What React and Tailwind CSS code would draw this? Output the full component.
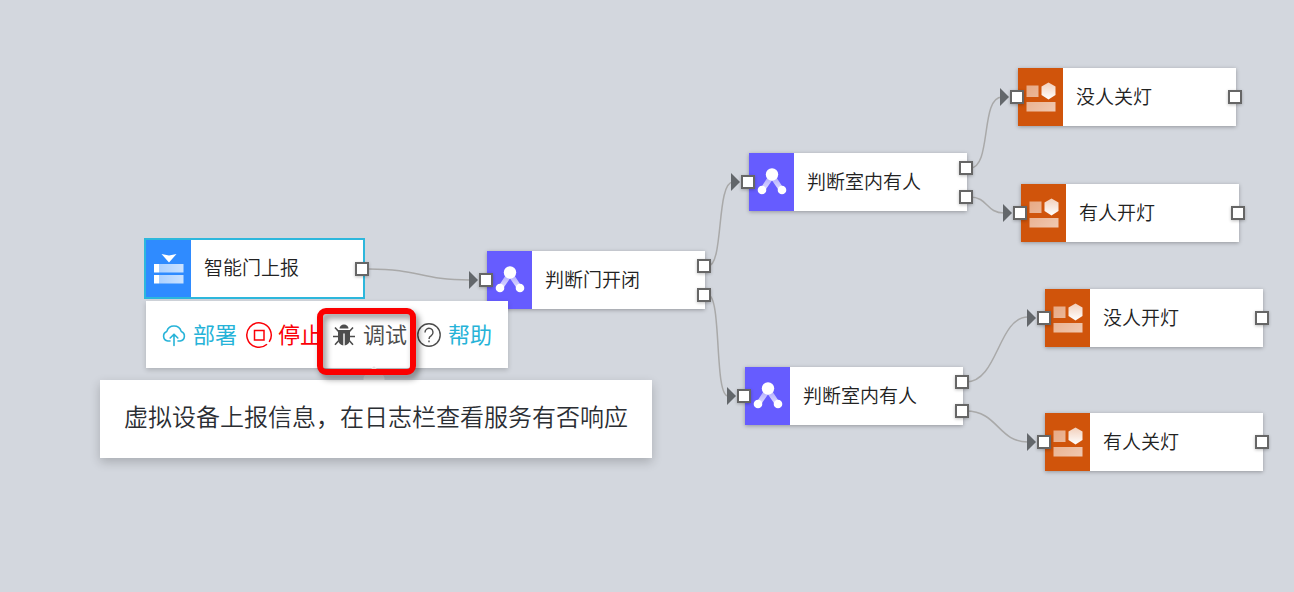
import React from "react";

const nodes = [
  { id: "report", kind: "device", label: "智能门上报", x: 144, y: 238, outputs: 1, selected: true },
  { id: "door", kind: "branch", label: "判断门开闭", x: 487, y: 251, outputs: 2 },
  { id: "roomA", kind: "branch", label: "判断室内有人", x: 749, y: 153, outputs: 2 },
  { id: "roomB", kind: "branch", label: "判断室内有人", x: 745, y: 367, outputs: 2 },
  { id: "offA", kind: "action", label: "没人关灯", x: 1018, y: 68, outputs: 1 },
  { id: "onA", kind: "action", label: "有人开灯", x: 1021, y: 184, outputs: 1 },
  { id: "onB", kind: "action", label: "没人开灯", x: 1045, y: 289, outputs: 1 },
  { id: "offB", kind: "action", label: "有人关灯", x: 1045, y: 413, outputs: 1 },
];

const edges = [
  "M369 269C420 269 420 280 470 280",
  "M708 266C724 266 716 182 733 182",
  "M708 295C722 295 714 396 728 396",
  "M970 168C992 168 980 97 1002 97",
  "M970 197C988 197 986 213 1004 213",
  "M966 382C998 382 998 317 1028 317",
  "M966 411C998 411 998 442 1028 442",
];

const tileColors = {
  device: "bg-[#2f8bff]",
  branch: "bg-[#665cff]",
  action: "bg-[#d0540b]",
};

function DeviceIcon() {
  return (
    <svg width="30" height="30" viewBox="0 0 30 30" aria-hidden="true">
      <defs>
        <linearGradient id="bar" x1="0" x2="1">
          <stop offset="0" stopColor="#fff" stopOpacity=".6" />
          <stop offset="1" stopColor="#fff" stopOpacity=".75" />
        </linearGradient>
      </defs>
      <path d="M7.500 0L15 1.500L22.500 0L15 8.500Z" fill="#fff" />
      <path d="M0 10h5v8.500H0zM0 21h5v8.500H0z" fill="#fff" />
      <path d="M5 10h24.500v8.500H5zM5 21h24.500v8.500H5z" fill="url(#bar)" />
    </svg>
  );
}

function BranchIcon() {
  return (
    <svg width="30" height="30" viewBox="0 0 30 30" aria-hidden="true">
      <defs>
        <linearGradient id="limb" x1="0" y1="0" x2="0" y2="1">
          <stop offset="0" stopColor="#fff" stopOpacity=".45" />
          <stop offset="1" stopColor="#fff" stopOpacity=".85" />
        </linearGradient>
      </defs>
      <path d="M11.500 9L16 12L7 25L3 22ZM18.500 9L14 12L23 25L27 22Z" fill="url(#limb)" />
      <circle cx="15" cy="7.500" r="6.200" fill="#fff" />
      <circle cx="5" cy="23" r="4.300" fill="#fff" />
      <circle cx="25" cy="23" r="4.300" fill="#fff" />
    </svg>
  );
}

function ActionIcon() {
  return (
    <svg width="30" height="30" viewBox="0 0 30 30" aria-hidden="true">
      <defs>
        <linearGradient id="block" x1="0" y1="0" x2="1" y2="1">
          <stop offset="0" stopColor="#fff" stopOpacity=".5" />
          <stop offset="1" stopColor="#fff" stopOpacity=".68" />
        </linearGradient>
        <linearGradient id="hex" x1="0" y1="0" x2="0" y2="1">
          <stop offset="0" stopColor="#fff" stopOpacity=".72" />
          <stop offset="1" stopColor="#fff" />
        </linearGradient>
      </defs>
      <path d="M0.500 3.500h12v11.500H0.500zM0.500 20h29v9.500H0.500z" fill="url(#block)" />
      <path d="M22.500 0.500L29.500 4.500V13L22.500 17.500L15.500 13V4.500Z" fill="url(#hex)" />
    </svg>
  );
}

const tileIcons = { device: DeviceIcon, branch: BranchIcon, action: ActionIcon };

function Port() {
  return <span className="block size-[14px] border-2 border-[#666] bg-white shadow-[0_1px_3px_rgba(0,0,0,0.25)]" />;
}

function FlowNode({ node }) {
  const Icon = tileIcons[node.kind];
  return (
    <div
      className={
        "absolute flex items-stretch bg-white " +
        (node.selected
          ? "h-[61px] w-[221px] border-2 border-[#2db7dc]"
          : "h-[58px] w-[218px] shadow-[0_1px_4px_rgba(0,0,0,0.3)]")
      }
      style={{ left: node.x, top: node.y }}
    >
      <div className={"flex w-[45px] shrink-0 items-center justify-center " + tileColors[node.kind]}>
        <Icon />
      </div>
      <div className="flex items-center pb-[3px] pl-[13px] text-[19px] leading-7 text-[#222]">{node.label}</div>
      {!node.selected && (
        <div className="absolute inset-y-0 left-[-18px] flex items-center gap-px">
          <svg width="9" height="18" viewBox="0 0 9 18" aria-hidden="true">
            <path d="M0 0L9 9L0 18Z" fill="#63676b" />
          </svg>
          <Port />
        </div>
      )}
      <div className="absolute inset-y-0 right-[-6px] flex flex-col justify-center gap-[15px]">
        {Array.from({ length: node.outputs }, (_, i) => (
          <Port key={i} />
        ))}
      </div>
    </div>
  );
}

function DeployIcon() {
  return (
    <svg width="24" height="24" viewBox="0 0 24 24" fill="none" stroke="currentColor" strokeWidth="1.600" strokeLinecap="round" strokeLinejoin="round" aria-hidden="true">
      <path d="M8 18H5.800A5 5 0 0 1 4.800 8.400A7.500 7.500 0 0 1 19.200 8.400A5 5 0 0 1 18.200 18H16M12 22.500V11.500M8.200 15L12 11.200L15.800 15" />
    </svg>
  );
}

function StopIcon() {
  return (
    <svg width="24" height="24" viewBox="0 0 24 24" fill="none" stroke="currentColor" strokeWidth="1.500" className="overflow-visible" aria-hidden="true">
      <path d="M20 21.300A12.200 12.200 0 1 1 22.200 18.800" />
      <path d="M7.500 7.500h9.500v9.500H7.500z" />
    </svg>
  );
}

function BugIcon() {
  return (
    <svg width="24" height="24" viewBox="0 0 24 24" aria-hidden="true">
      <path d="M7.500 5.500A4.500 4 0 0 1 16.500 5.500Z" fill="currentColor" />
      <path d="M6 7H18V16.500Q17.500 21.500 12.700 22.500V10.500H11.300V22.500Q6.500 21.500 6 16.500Z" fill="currentColor" />
      <path d="M3 4.500L6.800 8.800M21 4.500L17.200 8.800M1 13.500H7M17 13.500H23M6.800 17.500L3 21.800M17.200 17.500L21 21.800" fill="none" stroke="currentColor" strokeWidth="1.600" />
    </svg>
  );
}

function HelpIcon() {
  return (
    <svg width="24" height="24" viewBox="0 0 24 24" fill="none" stroke="currentColor" strokeWidth="1.400" aria-hidden="true">
      <circle cx="12" cy="12" r="11.200" />
      <path d="M8 9.500A4 4 0 1 1 14.300 12.600Q12 14 12 16" />
      <path d="M12 17.500V19.300" />
    </svg>
  );
}

function Action({ icon, label, tone, iconTone = "" }) {
  return (
    <button type="button" className={"flex cursor-pointer items-center gap-[7px] text-[22px] leading-8 whitespace-nowrap " + tone}>
      <span className={iconTone}>{icon}</span>
      <span className="pb-[3px] font-normal">{label}</span>
    </button>
  );
}

export default function App() {
  return (
    <main className="relative min-h-screen w-full overflow-hidden bg-[#d3d7de] font-['Noto_Sans_CJK_SC',sans-serif] font-[350]">
      <svg className="absolute top-0 left-0 h-full w-full" fill="none" stroke="#a9a9a9" strokeWidth="1.500" aria-hidden="true">
        {edges.map((d) => (
          <path key={d} d={d} />
        ))}
      </svg>

      {nodes.map((node) => (
        <FlowNode key={node.id} node={node} />
      ))}

      <div role="toolbar" className="absolute top-[301px] left-[146px] flex items-center gap-[10px] bg-white px-4 py-4 shadow-[0_2px_5px_rgba(0,0,0,0.18)]">
        <Action icon={<DeployIcon />} label="部署" tone="text-[#26b3d8]" />
        <Action icon={<StopIcon />} label="停止" tone="text-[#fb0007]" />
        <Action icon={<BugIcon />} label="调试" tone="text-[#4d4d4d]" />
        <Action icon={<HelpIcon />} label="帮助" tone="text-[#26b3d8]" iconTone="text-[#4d4d4d]" />
      </div>

      <div role="tooltip" className="absolute top-[380px] left-[100px] bg-white px-6 pt-[18px] pb-6 text-[24px] leading-9 whitespace-nowrap text-[#2b2e33] shadow-[0_4px_10px_rgba(0,0,0,0.2)]">
        虚拟设备上报信息，在日志栏查看服务有否响应
        <svg width="24" height="14" viewBox="0 0 24 14" className="absolute top-[-14px] left-[262px]" aria-hidden="true">
          <path d="M12 0L20 8.500Q23 10 22.500 14H1.500Q1 10 4 8.500Z" fill="#e8e8e8" />
        </svg>
      </div>

      <div className="pointer-events-none absolute top-[308px] left-[317px] h-[67px] w-[99px] rounded-[9px] border-6 border-[#fb0000] drop-shadow-[3px_4px_3px_rgba(0,0,0,0.45)]" />
    </main>
  );
}
